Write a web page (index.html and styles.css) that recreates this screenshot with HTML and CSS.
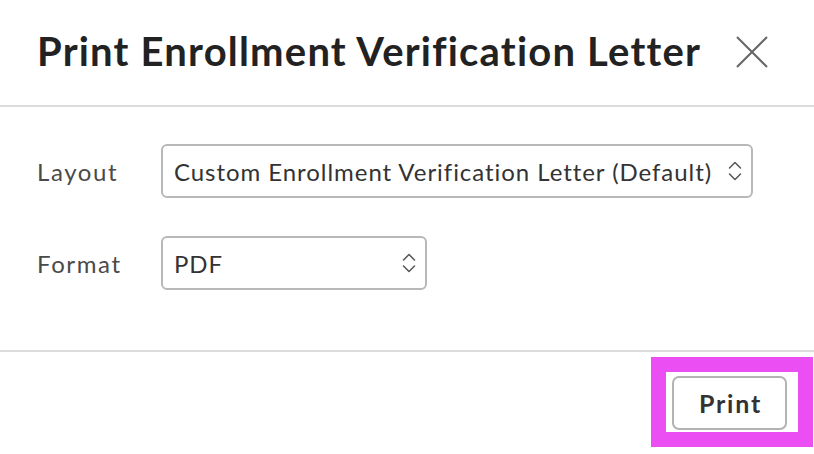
FILE: index.html
```html
<!DOCTYPE html>
<html lang="en">
<head>
<meta charset="utf-8">
<title>Print Enrollment Verification Letter</title>
<link rel="stylesheet" href="styles.css">
</head>
<body>
<div class="dialog">
  <header class="dialog-header">
    <h1 class="dialog-title">Print Enrollment Verification Letter</h1>
    <button class="close-btn" aria-label="Close">
      <svg width="32" height="32" viewBox="0 0 32 32"><path d="M1 1L31 31M31 1L1 31" stroke="#666" stroke-width="2" fill="none"/></svg>
    </button>
  </header>
  <main class="dialog-body">
    <div class="field">
      <label class="field-label">Layout</label>
      <div class="select select-wide">
        <span class="select-value">Custom Enrollment Verification Letter (Default)</span>
        <svg class="select-arrows" width="16" height="22" viewBox="0 0 16 22"><path d="M2.5 8L8 2.5L13.5 8M2.5 14L8 19.5L13.5 14" stroke="#555" stroke-width="1.5" fill="none" stroke-linecap="round" stroke-linejoin="round"/></svg>
      </div>
    </div>
    <div class="field">
      <label class="field-label">Format</label>
      <div class="select select-narrow">
        <span class="select-value">PDF</span>
        <svg class="select-arrows" width="16" height="22" viewBox="0 0 16 22"><path d="M2.5 8L8 2.5L13.5 8M2.5 14L8 19.5L13.5 14" stroke="#555" stroke-width="1.5" fill="none" stroke-linecap="round" stroke-linejoin="round"/></svg>
      </div>
    </div>
  </main>
  <footer class="dialog-footer">
    <div class="highlight">
      <button class="print-btn">Print</button>
    </div>
  </footer>
</div>
</body>
</html>
```

FILE: styles.css
```css
* { box-sizing: border-box; }
html, body { margin: 0; padding: 0; background: #fff; }
body {
  font-family: Lato, "Noto Sans", sans-serif;
  color: #333;
  font-variant-ligatures: none;
}

.dialog { width: 814px; height: 454px; display: flex; flex-direction: column; }

.dialog-header {
  height: 107px;
  padding: 0 46px 4px 37px;
  display: flex;
  align-items: center;
  justify-content: space-between;
  border-bottom: 2px solid #dcdcdc;
}
.dialog-title {
  margin: 0;
  font-size: 40px;
  font-weight: 700;
  color: #222;
  letter-spacing: 1.2px;
}
.close-btn {
  background: none; border: 0; padding: 0; margin-top: 2px;
  width: 32px; height: 32px; display: flex;
}

.dialog-body {
  padding: 37px 0 0 37px;
  height: 245px;
  display: flex;
  flex-direction: column;
  gap: 38px;
  border-bottom: 2px solid #dcdcdc;
}
.field { display: flex; align-items: center; }
.field-label { width: 124px; font-size: 24px; color: #4a4a4a; letter-spacing: 1.6px; }
.select {
  height: 54px;
  border: 2px solid #b8b8b8;
  border-radius: 6px;
  display: flex;
  align-items: center;
  justify-content: space-between;
  padding: 0 8px 0 11px;
}
.select-wide { width: 592px; }
.select-narrow { width: 266px; }
.select-value { font-size: 24px; color: #333; letter-spacing: 0.95px; }
.select-arrows { display: block; }

.dialog-footer {
  flex: 1;
  display: flex;
  justify-content: flex-end;
  align-items: flex-start;
  padding: 5px 1px 0 0;
}
.highlight {
  border: 15px solid #eb4ff3;
  padding: 4px 11px 2px 6px;
  display: flex;
}
.print-btn {
  width: 115px; height: 54px;
  border: 2px solid #b3b3b3;
  border-radius: 7px;
  background: #fff;
  font-family: Lato, "Noto Sans", sans-serif;
  font-size: 25px;
  font-weight: 700;
  color: #333;
  letter-spacing: 1.8px;
  padding: 0 0 0 2px;
}
```
